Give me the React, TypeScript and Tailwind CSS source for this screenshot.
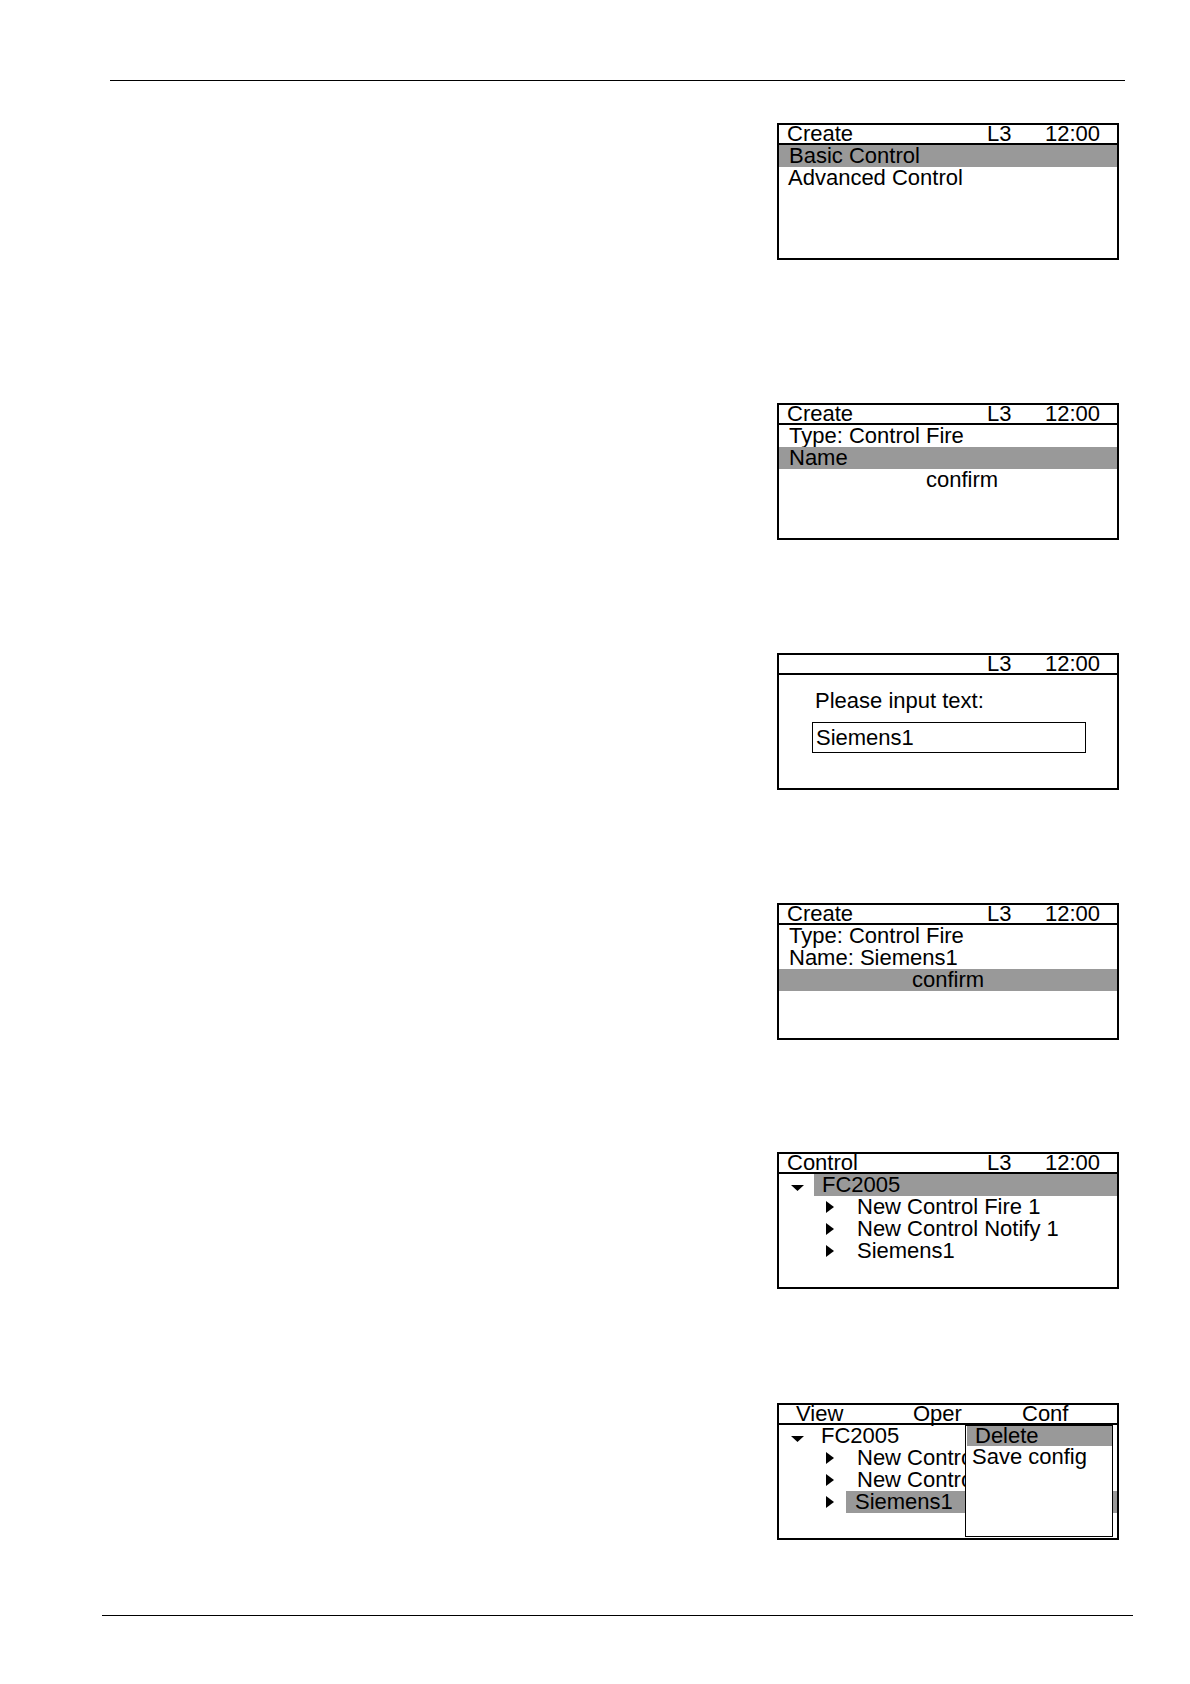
import React from "react";

function Header({ title }: { title?: string }) {
  return (
    <div className="h-[20px] shrink-0 border-b-2 border-black grid grid-cols-[208px_58px_1fr] leading-[17px] whitespace-nowrap">
      <span className="pl-[8px]">{title}</span>
      <span>L3</span>
      <span>12:00</span>
    </div>
  );
}

function Screen({ children, className = "" }: { children: React.ReactNode; className?: string }) {
  return (
    <div className={`relative w-[342px] h-[137px] border-2 border-black flex flex-col ${className}`}>
      {children}
    </div>
  );
}

function Row({ children, active = false, className = "" }: { children: React.ReactNode; active?: boolean; className?: string }) {
  return (
    <div className={`h-[22px] leading-[21px] whitespace-nowrap ${active ? "bg-[#999999]" : ""} ${className}`}>
      {children}
    </div>
  );
}

function Down() {
  return (
    <svg width="13" height="6" viewBox="0 0 13 6" className="mt-[11px] ml-[12px] shrink-0">
      <path d="M0 0H13L6.5 6Z" fill="black" />
    </svg>
  );
}

function Right() {
  return (
    <svg width="8" height="12" viewBox="0 0 8 12" className="shrink-0">
      <path d="M0 0L8 6L0 12Z" fill="black" />
    </svg>
  );
}

function TreeParent({ label, active = false }: { label: string; active?: boolean }) {
  return (
    <div className="h-[22px] flex leading-[21px] whitespace-nowrap">
      <div className="w-[35px] shrink-0 flex items-start">
        <Down />
      </div>
      <div className={`flex-1 ${active ? "bg-[#999999] pl-[8px]" : "pl-[7px]"}`}>{label}</div>
    </div>
  );
}

function TreeChild({ label, active = false }: { label: string; active?: boolean }) {
  return (
    <div className="h-[22px] flex items-center leading-[21px] whitespace-nowrap">
      <div className="w-[67px] shrink-0 pl-[47px] flex items-center">
        <Right />
      </div>
      {active ? (
        <div className="flex-1 h-[22px] bg-[#999999] pl-[9px]">{label}</div>
      ) : (
        <div className="flex-1 h-[22px] pl-[11px]">{label}</div>
      )}
    </div>
  );
}

export default function App() {
  return (
    <div className="w-[1190px] min-h-[1684px] bg-white text-black text-[22px] font-['Liberation_Sans',Arial,sans-serif] flex flex-col pt-[80px]">
      <div className="ml-[110px] w-[1015px] h-px bg-black" />

      <div className="ml-[777px] mt-[42px] flex flex-col">
        {/* create: choose type */}
        <Screen>
          <Header title="Create" />
          <Row active className="pl-[10px]">Basic Control</Row>
          <Row className="pl-[9px]">Advanced Control</Row>
        </Screen>

        {/* create: name */}
        <Screen className="mt-[143px]">
          <Header title="Create" />
          <Row className="pl-[10px]">Type: Control Fire</Row>
          <Row active className="pl-[10px]">Name</Row>
          <Row className="pl-[147px]">confirm</Row>
        </Screen>

        {/* text input */}
        <Screen className="mt-[113px]">
          <Header />
          <div className="mt-[15px] ml-[36px] leading-[22px]">Please input text:</div>
          <div className="mt-[10px] ml-[33px] w-[274px] h-[31px] border border-black pl-[3px] leading-[29px]">
            Siemens1
          </div>
        </Screen>

        {/* create: confirm */}
        <Screen className="mt-[113px]">
          <Header title="Create" />
          <Row className="pl-[10px]">Type: Control Fire</Row>
          <Row className="pl-[10px]">Name: Siemens1</Row>
          <Row active className="text-center">confirm</Row>
        </Screen>

        {/* control tree */}
        <Screen className="mt-[112px]">
          <Header title="Control" />
          <TreeParent label="FC2005" active />
          <TreeChild label="New Control Fire 1" />
          <TreeChild label="New Control Notify 1" />
          <TreeChild label="Siemens1" />
        </Screen>

        {/* context menu */}
        <Screen className="mt-[114px]">
          <div className="h-[20px] shrink-0 border-b-2 border-black flex leading-[17px] whitespace-nowrap">
            <span className="w-[134px] pl-[17px]">View</span>
            <span className="w-[109px]">Oper</span>
            <span>Conf</span>
          </div>
          <TreeParent label="FC2005" />
          <TreeChild label="New Control Fire 1" />
          <TreeChild label="New Control Notify 1" />
          <TreeChild label="Siemens1" active />
          <div className="absolute left-[186px] top-[20px] w-[148px] h-[112px] bg-white border border-black">
            <div className="ml-px h-[20px] leading-[19px] bg-[#999999] pl-[8px]">Delete</div>
            <div className="h-[22px] leading-[21px] pl-[6px] whitespace-nowrap">Save config</div>
          </div>
        </Screen>
      </div>

      <div className="ml-[102px] mt-[75px] w-[1031px] h-px bg-black" />
    </div>
  );
}
